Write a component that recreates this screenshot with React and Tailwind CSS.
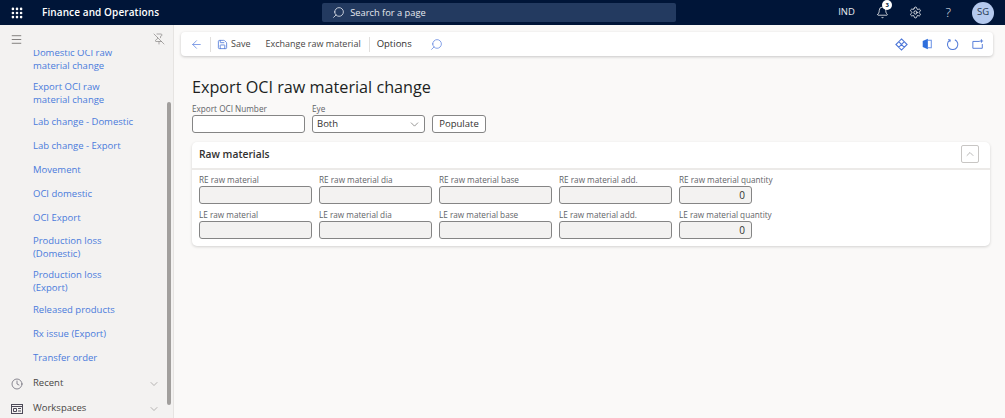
import React from 'react';
import { ArrowLeft, Save, Search, Bell, Settings, ChevronDown, ChevronUp, Clock, Grip, PinOff, Menu } from 'lucide-react';

const navItems = [
  { lines: ["Domestic OCI raw", "material change"] },
  { lines: ["Export OCI raw", "material change"] },
  { lines: ["Lab change - Domestic"] },
  { lines: ["Lab change - Export"] },
  { lines: ["Movement"] },
  { lines: ["OCI domestic"] },
  { lines: ["OCI Export"] },
  { lines: ["Production loss", "(Domestic)"] },
  { lines: ["Production loss", "(Export)"] },
  { lines: ["Released products"] },
  { lines: ["Rx issue (Export)"] },
  { lines: ["Transfer order"] },
];

const reFields = ["RE raw material", "RE raw material dia", "RE raw material base", "RE raw material add."];
const leFields = ["LE raw material", "LE raw material dia", "LE raw material base", "LE raw material add."];

function Field({ label, value, narrow }) {
  return (
    <div className={narrow ? "w-[73px] shrink-0" : "w-[113px] shrink-0"}>
      <div className="h-[13px] text-[8.2px] leading-[13px] font-medium text-[#5f6468] whitespace-nowrap">{label}</div>
      <div className="h-[18px] rounded-[3px] border border-[#858585] bg-[#f3f2f1] px-[6px] text-right text-[10px] leading-[17px] text-[#323130]">{value}</div>
    </div>
  );
}

function FieldRow({ labels, qty }) {
  return (
    <div className="flex gap-[7px]">
      {labels.map((l) => <Field key={l} label={l} />)}
      <Field label={qty} value="0" narrow />
    </div>
  );
}

export default function App() {
  return (
    <div className="w-[1005px] h-[418px] overflow-hidden flex flex-col bg-[#faf9f8] font-['Open_Sans','Noto_Sans',sans-serif]">
      <header className="h-[25px] shrink-0 bg-[#001538] flex items-center text-white">
        <Grip className="w-[14px] h-[14px] ml-[10px] text-white" strokeWidth={2.5} />
        <span className="ml-[18px] text-[10px] font-semibold tracking-[0.1px] whitespace-nowrap">Finance and Operations</span>
        <div className="ml-[163px] w-[354px] h-[19px] rounded-[2px] bg-[#233a60] flex items-center text-[#e6e9ef]">
          <Search className="w-[13px] h-[13px] ml-[10px] -scale-x-100" strokeWidth={1.5} />
          <span className="ml-[5px] text-[9.3px]">Search for a page</span>
        </div>
        <span className="ml-[162px] w-[20px] text-[9.5px] font-medium text-[#e8eaf0]">IND</span>
        <div className="relative ml-[18px]">
          <Bell className="w-[13px] h-[13px]" strokeWidth={1.4} />
          <span className="absolute -top-[6px] left-[6px] w-[10px] h-[10px] rounded-full bg-white text-[#001538] text-[6px] leading-[10px] text-center font-bold">3</span>
        </div>
        <Settings className="w-[13px] h-[13px] ml-[20px]" strokeWidth={1.5} />
        <span className="ml-[21px] w-[10px] text-center text-[13px] leading-none font-light text-[#e8eaf0]">?</span>
        <div className="ml-[19px] w-[22px] h-[22px] rounded-full bg-[#b4c9ee] text-[#24364f] text-[9.5px] font-medium flex items-center justify-center">SG</div>
      </header>

      <div className="flex flex-1 min-h-0">
        <aside className="relative w-[174px] shrink-0 bg-[#f3f2f1] border-r border-[#e6e4e2] flex flex-col">
          <div className="h-[25px] shrink-0 flex items-center justify-between pt-[3px] pl-[10px] pr-[8px] relative z-10 bg-[#f3f2f1]">
            <Menu className="w-[13px] h-[13px] text-[#605e5c]" strokeWidth={1.4} />
            <PinOff className="w-[12px] h-[12px] text-[#8a8886]" strokeWidth={1.4} />
          </div>
          <nav className="flex-1 min-h-0 flex flex-col -mt-[8px] overflow-hidden">
            {navItems.map((item) => (
              <a key={item.lines[0] + item.lines.length + item.lines[1]} className={`${item.lines.length > 1 ? "h-[34px]" : "h-[24px]"} shrink-0 flex flex-col justify-center pl-[33px] text-[9.5px] leading-[13.5px] text-[#4a7bdc] whitespace-nowrap`}>
                {item.lines.map((line) => <span key={line}>{line}</span>)}
              </a>
            ))}
            <div className="h-[25px] mt-[1px] shrink-0 flex items-center pl-[11px] pr-[13px] text-[9.5px] text-[#484644]">
              <Clock className="w-[12px] h-[12px] text-[#5b5a68]" strokeWidth={1.4} />
              <span className="ml-[10px] flex-1">Recent</span>
              <ChevronDown className="w-[12px] h-[12px] text-[#8a8886]" strokeWidth={1.2} />
            </div>
            <div className="h-[25px] shrink-0 flex items-center pl-[11px] pr-[13px] text-[9.5px] text-[#484644]">
              <svg viewBox="0 0 12 10" className="w-[12px] h-[10px] text-[#4c4a58]" fill="none" stroke="currentColor" strokeWidth="1">
                <rect x="0.5" y="0.5" width="11" height="9" />
                <path d="M0.5 2.5h11M2.5 4.5h3v3h-3zM7 4.5h3M7 7h3" />
              </svg>
              <span className="ml-[10px] flex-1">Workspaces</span>
              <ChevronDown className="w-[12px] h-[12px] text-[#8a8886]" strokeWidth={1.2} />
            </div>
          </nav>
          <div className="absolute left-[167px] top-[77px] w-[4px] h-[303px] rounded-full bg-[#a19f9d]" />
        </aside>

        <main className="flex-1 min-w-0 pt-[7px] pl-[7px]">
          <div className="w-[812px] h-[24px] rounded-[4px] bg-white shadow-[0_1px_3px_rgba(0,0,0,0.2)] flex items-center text-[9px] text-[#484644]">
            <ArrowLeft className="w-[13px] h-[13px] ml-[9px] text-[#5f84e0]" strokeWidth={1.4} />
            <div className="ml-[7px] w-px h-[15px] bg-[#e1dfdd]" />
            <Save className="w-[11px] h-[11px] ml-[6px] text-[#4f78d8]" strokeWidth={1.8} />
            <span className="ml-[3px]">Save</span>
            <span className="ml-[15px] whitespace-nowrap">Exchange raw material</span>
            <div className="ml-[8px] w-px h-[15px] bg-[#e1dfdd]" />
            <span className="ml-[7px] text-[9.5px] text-[#323130] font-medium">Options</span>
            <Search className="w-[13px] h-[13px] ml-[18px] text-[#5f84e0] -scale-x-100" strokeWidth={1.4} />
            <div className="ml-auto flex items-center gap-[13px] pr-[9px] text-[#4f78d8]">
              <svg viewBox="0 0 14 14" className="w-[13px] h-[13px]" fill="none" stroke="currentColor" strokeWidth="1.2">
                <path d="M7 1l6 6-6 6-6-6zM4 4l6 6M10 4l-6 6" />
              </svg>
              <svg viewBox="0 0 14 14" className="w-[12px] h-[12px]">
                <path d="M2 3.5L8 1v12l-6-2.5z" fill="#2f6fdc" />
                <path d="M8 2.5h4v9H8" fill="none" stroke="#6b93e6" strokeWidth="1.2" />
              </svg>
              <svg viewBox="0 0 14 14" className="w-[13px] h-[13px]" fill="none" stroke="currentColor" strokeWidth="1.1">
                <path d="M9.5 1.8A5.6 5.6 0 1 1 4 2.3" />
                <path d="M2.5 1.5L4.6 2.2 4 4.3" />
              </svg>
              <svg viewBox="0 0 14 14" className="w-[12px] h-[12px]" fill="none" stroke="currentColor" strokeWidth="1.1">
                <path d="M9 4H1v8h11V7M11 1.5v4M9 3.5h4" />
              </svg>
            </div>
          </div>

          <div className="pl-[11px]">
            <h1 className="mt-[20px] h-[22px] text-[16.2px] leading-[22px] font-medium text-[#201f1e] whitespace-nowrap">Export OCI raw material change</h1>
            <div className="mt-[4px] flex items-end gap-[7px]">
              <div className="w-[113px]">
                <div className="h-[13px] text-[8.2px] leading-[13px] font-medium text-[#5f6468]">Export OCI Number</div>
                <div className="h-[18px] rounded-[3px] border border-[#858585] bg-white" />
              </div>
              <div className="w-[113px]">
                <div className="h-[13px] text-[8.2px] leading-[13px] font-medium text-[#5f6468]">Eye</div>
                <div className="h-[18px] rounded-[3px] border border-[#858585] bg-white flex items-center justify-between pl-[4px] pr-[3px] text-[9.5px] text-[#323130]">
                  Both
                  <ChevronDown className="w-[13px] h-[13px] text-[#605e5c]" strokeWidth={1.2} />
                </div>
              </div>
              <button className="w-[54px] h-[18px] rounded-[3px] border border-[#858585] bg-white text-[9.5px] font-medium text-[#323130]">Populate</button>
            </div>

            <section className="mt-[9px] w-[798px] h-[104px] rounded-[5px] bg-white shadow-[0_1px_3px_rgba(0,0,0,0.16)]">
              <div className="h-[28px] border-b-2 border-[#eceae8] flex items-center justify-between pl-[7px] pr-[11px]">
                <h2 className="text-[10.3px] font-semibold text-[#323130]">Raw materials</h2>
                <div className="mb-[2px] w-[18px] h-[18px] rounded-[2px] border border-[#c8c6c4] flex items-center justify-center">
                  <ChevronUp className="w-[12px] h-[12px] text-[#8a8886]" strokeWidth={1.2} />
                </div>
              </div>
              <div className="pl-[7px] pt-[3px] flex flex-col gap-[4px]">
                <FieldRow labels={reFields} qty="RE raw material quantity" />
                <FieldRow labels={leFields} qty="LE raw material quantity" />
              </div>
            </section>
          </div>
        </main>
      </div>
    </div>
  );
}
